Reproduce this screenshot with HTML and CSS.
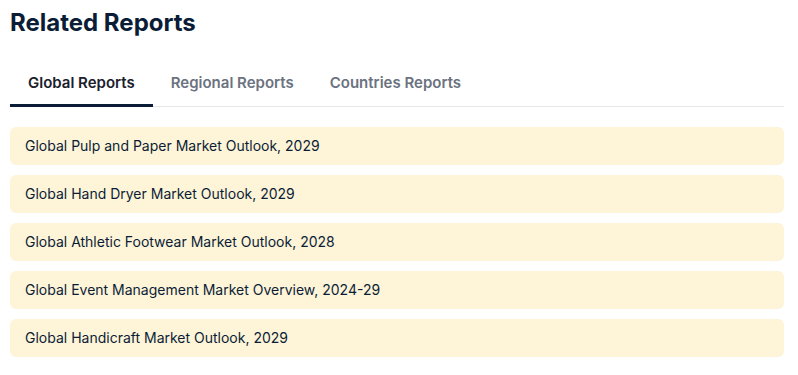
FILE: index.html
```html
<!DOCTYPE html>
<html lang="en">
<head>
    <meta charset="UTF-8">
    <meta name="viewport" content="width=device-width, initial-scale=1.0">
    <title>Related Reports</title>
    <link rel="stylesheet" href="styles.css">
</head>
<body>
    <div class="container">
        <h1>Related Reports</h1>
        <div class="tabs">
            <button class="tab active">Global Reports</button>
            <button class="tab">Regional Reports</button>
            <button class="tab">Countries Reports</button>
        </div>
        <ul class="report-list">
            <li><a href="#">Global Pulp and Paper Market Outlook, 2029</a></li>
            <li><a href="#">Global Hand Dryer Market Outlook, 2029</a></li>
            <li><a href="#">Global Athletic Footwear Market Outlook, 2028</a></li>
            <li><a href="#">Global Event Management Market Overview, 2024-29</a></li>
            <li><a href="#">Global Handicraft Market Outlook, 2029</a></li>
        </ul>
    </div>
</body>
</html>
```

FILE: styles.css
```css
body {
    font-family: Inter, "Liberation Sans", Arial, sans-serif;
    margin: 0;
    background-color: #fff;
    color: #0b1d36;
}
.container {
    padding: 8px 14px 0 10px;
}
h1 {
    margin: 0;
    font-size: 24px;
    line-height: 30px;
    font-weight: 700;
    color: #0b1d36;
}
.tabs {
    display: flex;
    margin-top: 23px;
    border-bottom: 1px solid #e5e7eb;
}
.tab {
    font-family: inherit;
    font-size: 15px;
    line-height: 20px;
    font-weight: 600;
    color: #6b7280;
    background: none;
    border: none;
    border-bottom: 3px solid transparent;
    margin-bottom: -1px;
    padding: 12px 18px 11px;
    cursor: pointer;
}
.tab.active {
    color: #1a202c;
    border-bottom-color: #0b1d36;
}
.report-list {
    list-style: none;
    margin: 20px 0 0;
    padding: 0;
    display: flex;
    flex-direction: column;
    gap: 10px;
}
.report-list li {
    background-color: #fef4d8;
    border-radius: 6px;
    padding: 9px 15px;
    font-size: 14px;
    line-height: 20px;
}
.report-list a {
    color: #0b1d36;
    text-decoration: none;
}
```
